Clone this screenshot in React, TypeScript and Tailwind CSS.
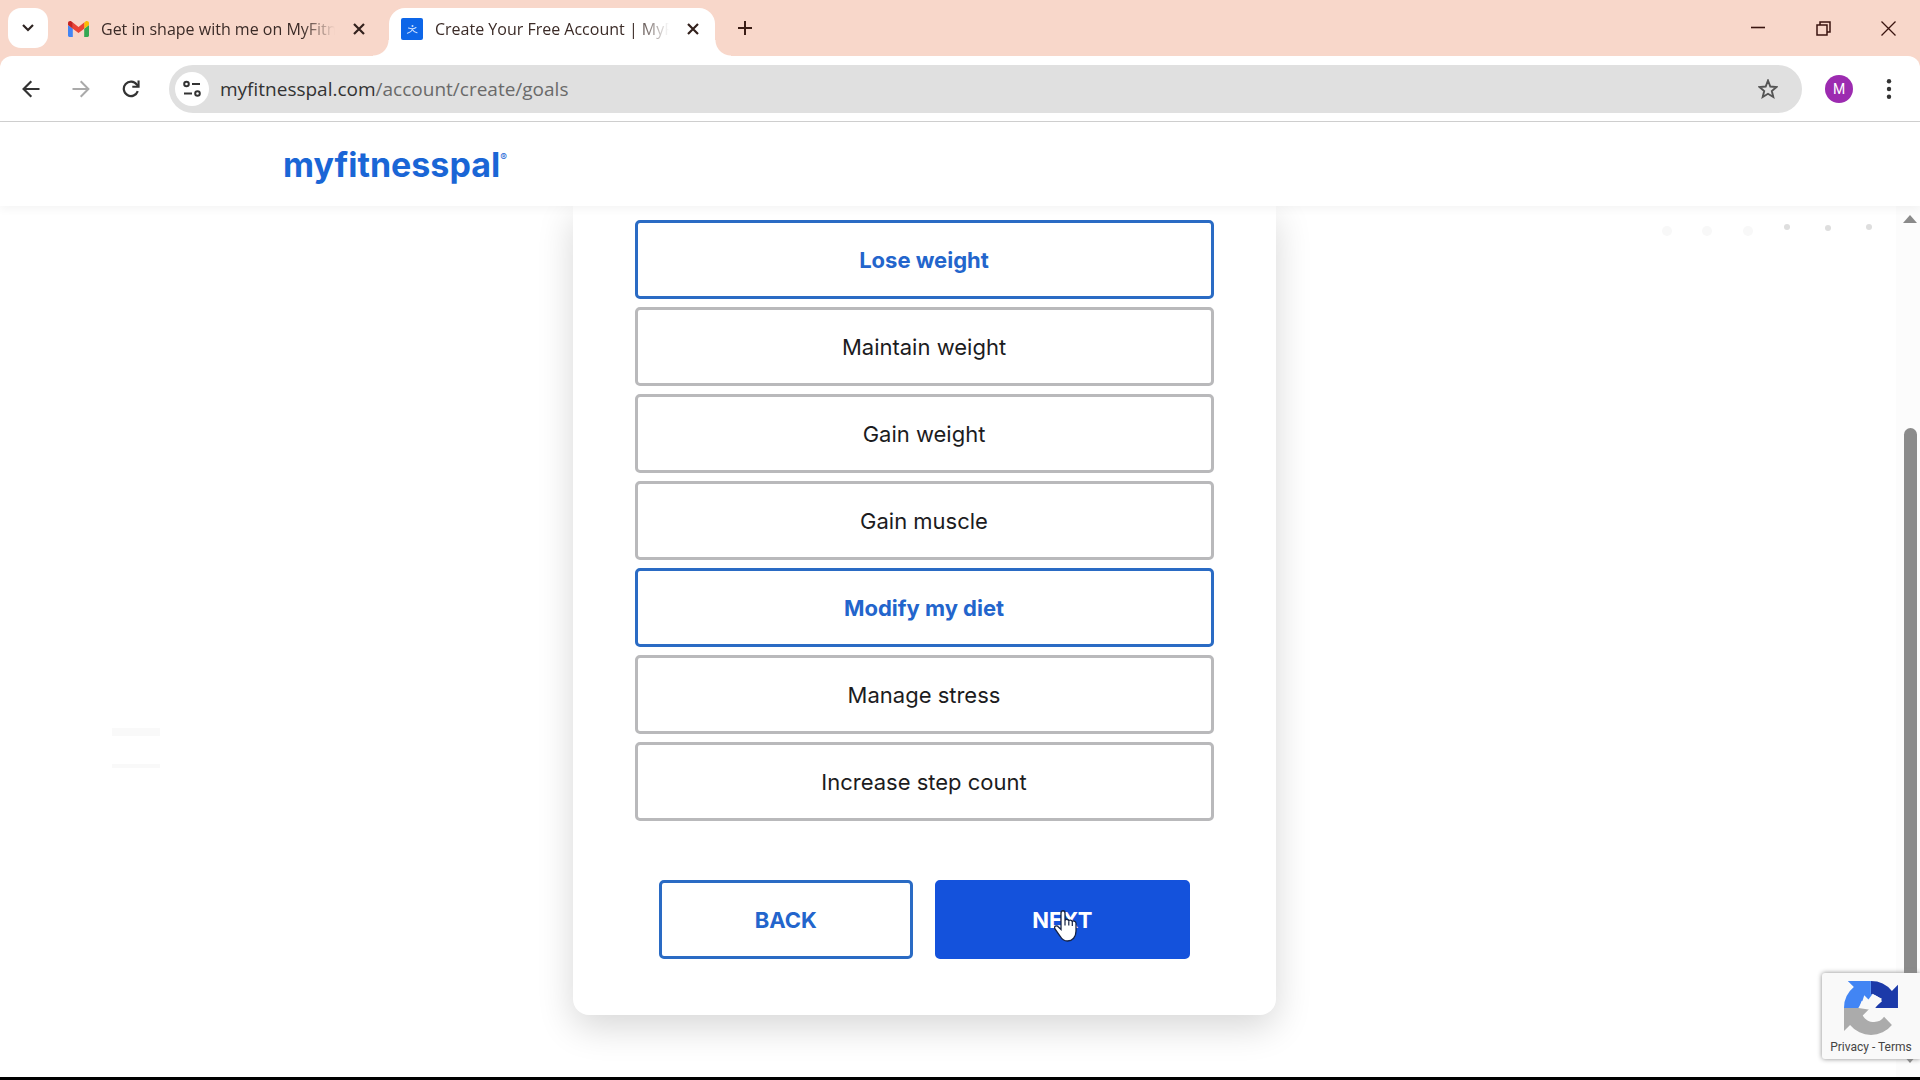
import { useState } from 'react';
import type { ReactNode } from 'react';

const GOALS = [
    'Lose weight',
    'Maintain weight',
    'Gain weight',
    'Gain muscle',
    'Modify my diet',
    'Manage stress',
    'Increase step count',
];

function GmailIcon() {
    return (
        <svg viewBox="0 0 24 18" className="h-4 w-[21px] shrink-0" aria-hidden="true">
            <path d="M1.6 18H5.5V8.7L0 4.5V16.4C0 17.3.7 18 1.6 18Z" fill="#4285f4" />
            <path d="M18.5 18h3.9c.9 0 1.6-.7 1.6-1.6V4.5l-5.5 4.2Z" fill="#34a853" />
            <path d="M18.5 1.7v7L24 4.5V2.4C24 .4 21.7-.8 20 .5Z" fill="#fbbc04" />
            <path d="M5.5 8.7v-7L12 6.6l6.5-4.9v7L12 13.6Z" fill="#ea4335" />
            <path d="M0 2.4v2.1l5.500 4.200v-7L4 .5C2.300-.8 0 .4 0 2.400Z" fill="#c5221f" />
        </svg>
    );
}

function PalIcon() {
    return (
        <svg viewBox="0 0 22 22" className="size-[22px] shrink-0" aria-hidden="true">
            <rect width="22" height="22" rx="2" fill="#0d66e8" />
            <circle cx="11.500" cy="8" r="1" fill="#cfe2ff" />
            <path d="M7.500 10c2.500 1 5.500 1 7.500-.5M11.400 11c-.4 1.800-2 3.300-5 4.200M11.600 11.800c.8 1.600 2 2.400 4.400 3" stroke="#cfe2ff" strokeWidth="1.100" fill="none" strokeLinecap="round" />
        </svg>
    );
}

function CloseIcon() {
    return (
        <svg viewBox="0 0 12 12" className="size-3" aria-hidden="true">
            <path d="M1 1l10 10M11 1L1 11" stroke="#33211d" strokeWidth="2.200" />
        </svg>
    );
}

function Tab({ title, icon, active }: { title: string; icon: ReactNode; active?: boolean }) {
    return (
        <div className={active
            ? 'relative flex h-12 w-[326px] items-center gap-3 self-end rounded-t-[16px] bg-white pb-[6px] pr-[10px] pl-3'
            : 'flex h-12 w-[323px] items-center gap-3 self-end pb-[6px] pr-2 pl-3'}
        >
            {active && (
                <>
                    <span className="absolute bottom-0 -left-4 size-4 bg-[radial-gradient(circle_at_0_0,transparent_15px,#fff_16px)]" />
                    <span className="absolute -right-4 bottom-0 size-4 bg-[radial-gradient(circle_at_100%_0,transparent_15px,#fff_16px)]" />
                </>
            )}
            {icon}
            <span className="min-w-0 flex-1 text-base whitespace-nowrap text-[#3b2b27] [mask-image:linear-gradient(to_right,#000_86%,transparent)]">
                {title}
            </span>
            <button type="button" aria-label="Close tab" className="flex size-6 items-center justify-center">
                <CloseIcon />
            </button>
        </div>
    );
}

function TabStrip() {
    return (
        <div className="flex h-14 items-center bg-[#f8d7ca] pl-2">
            <button type="button" aria-label="Search tabs" className="flex size-10 items-center justify-center rounded-[13px] bg-white">
                <svg viewBox="0 0 12 8" className="h-2 w-3" aria-hidden="true">
                    <path d="M1 1l5 5 5-5" stroke="#2e2422" strokeWidth="2.200" fill="none" />
                </svg>
            </button>
            <div className="flex h-full gap-[10px] pl-2">
                <Tab title="Get in shape with me on MyFitn" icon={<GmailIcon />} />
                <Tab title="Create Your Free Account | MyF" icon={<PalIcon />} active />
            </div>
            <button type="button" aria-label="New tab" className="ml-[14px] flex size-8 items-center justify-center">
                <svg viewBox="0 0 14 14" className="size-[14px]" aria-hidden="true">
                    <path d="M7 0v14M0 7h14" stroke="#3a1c15" strokeWidth="2" />
                </svg>
            </button>
            <div className="ml-auto flex items-center gap-[33px] pr-4">
                <button type="button" aria-label="Minimize" className="flex size-8 items-center justify-center">
                    <svg viewBox="0 0 14 14" className="size-[14px]" aria-hidden="true">
                        <path d="M0 6.500h14" stroke="#3a1410" strokeWidth="1.600" />
                    </svg>
                </button>
                <button type="button" aria-label="Restore" className="flex size-8 items-center justify-center">
                    <svg viewBox="0 0 15 15" className="size-[15px]" fill="none" stroke="#3a1410" strokeWidth="1.500" aria-hidden="true">
                        <path d="M1 4h10v10H1zM4 4V1h10v10h-3" />
                    </svg>
                </button>
                <button type="button" aria-label="Close window" className="flex size-8 items-center justify-center">
                    <svg viewBox="0 0 15 15" className="size-[15px]" aria-hidden="true">
                        <path d="M.5.5l14 14M14.500.5l-14 14" stroke="#3a1410" strokeWidth="1.300" />
                    </svg>
                </button>
            </div>
        </div>
    );
}

function AddressBar() {
    return (
        <div className="bg-[#f8d7ca]">
            <div className="flex h-[66px] items-center rounded-t-xl border-b border-[#cfcfcf] bg-white pr-[15px] pl-[15px]">
                <div className="flex items-center gap-[18px]">
                    <button type="button" aria-label="Back" className="flex size-8 items-center justify-center">
                        <svg viewBox="0 0 18 18" className="size-[18px]" fill="none" stroke="#333" strokeWidth="2.200" aria-hidden="true">
                            <path d="M17.500 9H2M9.300 1.300L1.600 9l7.700 7.700" />
                        </svg>
                    </button>
                    <button type="button" aria-label="Forward" className="flex size-8 items-center justify-center">
                        <svg viewBox="0 0 18 18" className="size-[18px]" fill="none" stroke="#aaa" strokeWidth="2" aria-hidden="true">
                            <path d="M.5 9H16M8.700 1.300L16.400 9l-7.700 7.700" />
                        </svg>
                    </button>
                    <button type="button" aria-label="Reload" className="flex size-8 items-center justify-center">
                        <svg viewBox="0 0 18 18" className="size-[18px]" aria-hidden="true">
                            <path d="M15.800 11.200A7.200 7.200 0 1 1 14.800 4.600L16.300 6.300" fill="none" stroke="#333" strokeWidth="2.200" />
                            <path d="M17.600.5v7.300h-7.300V5.700h5.200V.5Z" fill="#333" />
                        </svg>
                    </button>
                </div>
                <div className="ml-[22px] flex h-12 flex-1 items-center rounded-full bg-[#e0e0e0] pr-[18px] pl-[6px]">
                    <button type="button" aria-label="Site information" className="flex size-[34px] items-center justify-center rounded-full bg-white">
                        <svg viewBox="0 0 18 18" className="size-[18px]" fill="none" stroke="#333" strokeWidth="2" aria-hidden="true">
                            <circle cx="3.500" cy="4" r="2.300" />
                            <path d="M9 4h8M1 13.500h8" />
                            <circle cx="14.500" cy="13.500" r="2.300" />
                        </svg>
                    </button>
                    <div className="flex-1 pl-[11px] text-[19px] leading-7 text-[#6a6a6a]">
                        <span className="text-[#333]">myfitnesspal.com</span>/account/create/goals
                    </div>
                    <button type="button" aria-label="Bookmark this tab" className="flex size-8 items-center justify-center">
                        <svg viewBox="0 0 20 20" className="size-5" fill="none" stroke="#555" strokeWidth="1.900" aria-hidden="true">
                            <path d="M10 1.500l2.300 6 6.200.5-4.700 4 1.500 6-5.300-3.200L4.700 18l1.500-6L1.500 8l6.200-.5Z" />
                        </svg>
                    </button>
                </div>
                <button type="button" className="ml-[23px] flex size-7 items-center justify-center rounded-full bg-[#9c2bb0] font-['Roboto',sans-serif] text-sm text-white">
                    M
                </button>
                <button type="button" aria-label="Menu" className="ml-5 flex size-8 items-center justify-center">
                    <svg viewBox="0 0 6 20" className="h-5 w-[6px]" fill="#333" aria-hidden="true">
                        <circle cx="3" cy="2.200" r="2.200" />
                        <circle cx="3" cy="10" r="2.200" />
                        <circle cx="3" cy="17.800" r="2.200" />
                    </svg>
                </button>
            </div>
        </div>
    );
}

function RecaptchaBadge() {
    return (
        <div className="absolute right-0 bottom-[18px] z-30 flex h-[86px] w-[98px] flex-col items-center rounded-l-[3px] bg-[#f9f9f9] pt-2 shadow-[0_0_5px_#888]">
            <svg viewBox="0 0 64 64" className="size-[54px]" aria-hidden="true">
                <path d="M64 31.960a30 30 0 0 0-.04-1.370V4.570l-7.200 7.200A31.900 31.900 0 0 0 32 0v15.900a15.200 15.200 0 0 1 10.300 4.600 11 11 0 0 1 2.700 3.400L36 32Z" fill="#1c3aa9" />
                <path d="M31.860 0H4.500l7.200 7.200A31.900 31.900 0 0 0 0 32h19.500a15.500 15.500 0 0 1 1.500-8.500l9 8c-2-7 0-12 5-13.500L31.860 15Z" fill="#4285f4" />
                <path d="M0 32v27.300l7.200-7.200A31.900 31.900 0 0 0 56.800 52L47.500 42.500a14.500 14.500 0 0 1-11.700 6.200c-6 0-11-3-13.600-7.700L31 32Z" fill="#ababab" />
                <path d="M17 32l5-9 2-6 5 5 5-7 5 3 6 3-8 11-6 2Z" fill="#f9f9f9" />
            </svg>
            <div className="mt-1 font-['Roboto',sans-serif] text-xs leading-4 text-[#444]">
                <a href="#privacy">Privacy</a> - <a href="#terms">Terms</a>
            </div>
        </div>
    );
}

function HandCursor() {
    return (
        <svg viewBox="0 0 24 32" className="pointer-events-none absolute top-[27px] left-[116px] h-8 w-6" aria-hidden="true">
            <path
                d="M7 3c0-3 4-3 4 0v8c0-2.500 3.800-2.300 3.800.4 0-2 3.500-1.800 3.500.7 0-1.800 3.700-1.500 3.700 1.200V21c0 6-3.500 10-8.500 10-3.500 0-5.500-1.500-7.500-5L1 19c-1.500-2.800 1.500-4.300 3.500-2L7 19.500Z"
                fill="#fff"
                stroke="#152244"
                strokeWidth="1.300"
            />
            <path d="M11 11v4.500M14.800 11.500v4M18.300 12v4" stroke="#152244" strokeWidth="1.200" />
        </svg>
    );
}

export default function App() {
    const [selected, setSelected] = useState<string[]>(['Lose weight', 'Modify my diet']);

    function toggle(goal: string) {
        setSelected(s => (s.includes(goal) ? s.filter(g => g !== goal) : [...s, goal]));
    }

    return (
        <div className="flex h-screen flex-col overflow-hidden border-b-[3px] border-black bg-white font-['Open_Sans','Noto_Sans',sans-serif]">
            <TabStrip />
            <AddressBar />

            <div className="relative flex min-h-0 flex-1 flex-col font-['Inter',sans-serif]">
                <header className="relative z-20 flex h-[84px] shrink-0 items-center bg-white pt-[2px] pl-[283px] shadow-[0_4px_8px_rgba(0,0,0,0.04)]">
                    <a href="#home" className="flex items-start text-[34px] leading-10 font-bold text-[#1a66d6]">
                        myfitnesspal
                        <span className="text-[10px] leading-6 font-normal">®</span>
                    </a>
                </header>

                <div className="flex min-h-0 flex-1">
                    <main className="flex flex-1 items-start justify-center overflow-hidden pr-12">
                        <form
                            className="w-[703px] rounded-b-2xl bg-white px-[62px] pt-[14px] pb-14 shadow-[0_12px_36px_rgba(0,0,0,0.16)]"
                            onSubmit={e => e.preventDefault()}
                        >
                            <div className="flex flex-col gap-2">
                                {GOALS.map(goal => (
                                    <button
                                        key={goal}
                                        type="button"
                                        aria-pressed={selected.includes(goal)}
                                        onClick={() => toggle(goal)}
                                        className={selected.includes(goal)
                                            ? 'h-[79px] rounded-[5px] border-[3px] border-[#2a6bc4] pt-[2px] text-[22px] font-bold text-[#2365cc]'
                                            : 'h-[79px] rounded-[5px] border-[3px] border-[#b9b9bb] pt-[2px] text-[22px] text-[#1c1c1e]'}
                                    >
                                        {goal}
                                    </button>
                                ))}
                            </div>
                            <div className="mt-[59px] flex gap-[22px] px-6">
                                <button type="button" className="h-[79px] flex-1 rounded-[5px] border-[3px] border-[#2a6bc4] pt-[2px] text-[22px] font-bold text-[#2365cc]">
                                    BACK
                                </button>
                                <button type="submit" className="relative h-[79px] flex-1 rounded-[5px] border-[3px] border-[#1452dc] bg-[#1452dc] pt-[2px] text-[22px] font-bold text-white">
                                    NEXT
                                    <HandCursor />
                                </button>
                            </div>
                        </form>
                    </main>

                    {/* Scrollbar */}
                    <div className="flex w-6 flex-col items-center bg-[#fcfcfc] pt-[9px] pb-[14px] pl-1" aria-hidden="true">
                        <svg viewBox="0 0 14 8" className="h-2 w-[14px] shrink-0" fill="#8a8a8a"><path d="M7 0l7 8H0Z" /></svg>
                        <div className="mt-[205px] mb-1 w-[13px] flex-1 rounded-full bg-[#8b8b8b]" />
                        <svg viewBox="0 0 14 8" className="h-2 w-[14px] shrink-0" fill="#8a8a8a"><path d="M7 8l7-8H0Z" /></svg>
                    </div>
                </div>

                {/* Faint pattern behind the card */}
                <svg viewBox="0 0 225 20" className="absolute top-[98px] right-[45px] z-10 h-5 w-[225px]" aria-hidden="true">
                    <g fill="#f8f8f8">
                        <circle cx="17" cy="11" r="5" />
                        <circle cx="57" cy="11" r="5" />
                        <circle cx="98" cy="11" r="5" />
                    </g>
                    <g fill="#dedede">
                        <circle cx="137" cy="7" r="3" />
                        <circle cx="178" cy="8" r="3" />
                        <circle cx="219" cy="7" r="3" />
                    </g>
                </svg>
                <svg viewBox="0 0 48 42" className="absolute top-[605px] left-28 h-[42px] w-12" fill="#f9f9f9" aria-hidden="true">
                    <path d="M0 1h48v8H0zM0 37h48v4H0z" />
                </svg>

                <RecaptchaBadge />
            </div>
        </div>
    );
}
